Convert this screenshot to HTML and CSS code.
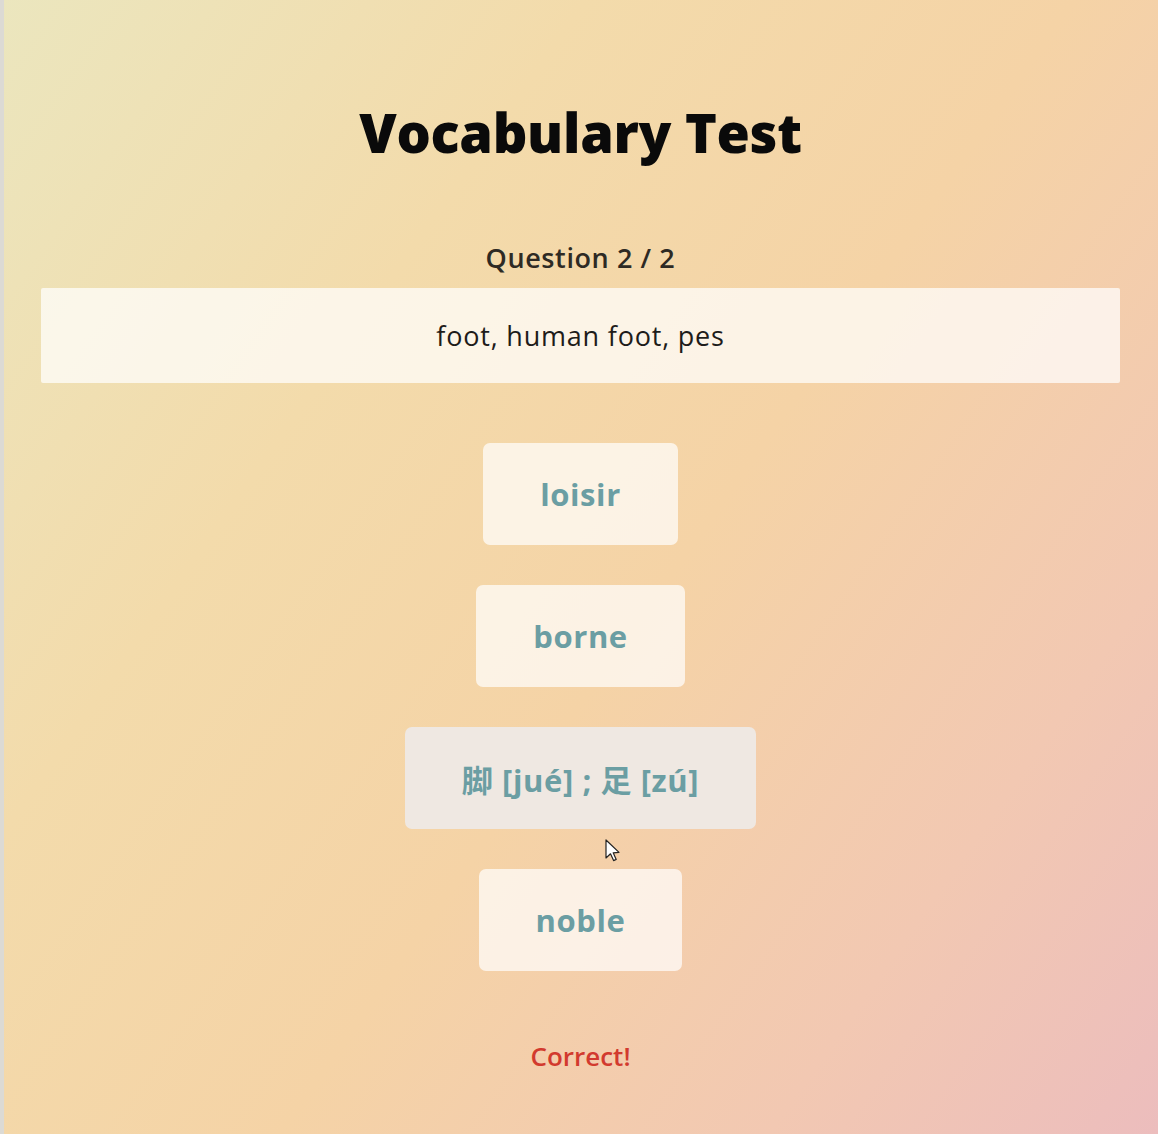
FILE: index.html
```html
<!DOCTYPE html>
<html lang="en">
<head>
<meta charset="utf-8">
<title>Vocabulary Test</title>
<link rel="stylesheet" href="styles.css">
</head>
<body>
<main class="quiz">
  <h1 class="title">Vocabulary Test</h1>
  <p class="counter">Question 2 / 2</p>
  <div class="prompt">foot, human foot, pes</div>
  <div class="options">
    <button class="option">loisir</button>
    <button class="option">borne</button>
    <button class="option option-hover">脚 [jué] ; 足 [zú]
      <svg class="cursor" width="16" height="24" viewBox="0 0 16 24"><path d="M1 1 L1 19 L5.5 14.8 L8.6 21.6 L11.2 20.4 L8.2 13.8 L14 13.4 Z" fill="#fff" stroke="#222" stroke-width="1.2" stroke-linejoin="round"/></svg>
    </button>
    <button class="option">noble</button>
  </div>
  <p class="result">Correct!</p>
</main>
</body>
</html>
```
FILE: styles.css
```css
html, body {
  margin: 0;
  height: 100%;
}
body {
  border-left: 4px solid #dcdad4;
  box-sizing: border-box;
  min-height: 1134px;
  background: linear-gradient(125deg, #ebe6be 0%, #f3dbab 30%, #f5d3a6 55%, #f2c8b2 80%, #ecbdbd 100%);
  font-family: "Open Sans", "Noto Sans CJK SC", sans-serif;
}
.quiz {
  display: flex;
  flex-direction: column;
  align-items: center;
  padding: 0 38px 0 37px;
}
.title {
  margin: 96px 0 0;
  font-size: 54px;
  line-height: 72px;
  font-weight: 800;
  color: #0a0a0a;
  letter-spacing: -0.3px;
}
.counter {
  margin: 72px 0 0;
  font-size: 27px;
  line-height: 36px;
  font-weight: 600;
  color: #2e2a24;
  letter-spacing: 0.6px;
}
.prompt {
  align-self: stretch;
  margin-top: 12px;
  height: 95px;
  display: flex;
  align-items: center;
  justify-content: center;
  background: rgba(255, 255, 255, 0.72);
  border-radius: 2px;
  font-size: 27px;
  font-weight: 500;
  color: #1e1c1a;
  letter-spacing: 0.8px;
}
.options {
  margin-top: 60px;
  display: flex;
  flex-direction: column;
  align-items: center;
  gap: 40px;
}
.option {
  position: relative;
  height: 102px;
  padding: 0 57px;
  border: none;
  border-radius: 7px;
  background: rgba(255, 255, 255, 0.7);
  font-family: "Open Sans", "Noto Sans CJK SC", sans-serif;
  font-size: 31px;
  font-weight: 700;
  color: #6b9ea3;
  letter-spacing: 0.6px;
}
.option-hover {
  background: #efe8e2;
}
.cursor {
  position: absolute;
  left: 200px;
  top: 112px;
}
.result {
  margin: 68px 0 0;
  font-size: 26px;
  line-height: 34px;
  font-weight: 600;
  color: #d23a2e;
}
```
